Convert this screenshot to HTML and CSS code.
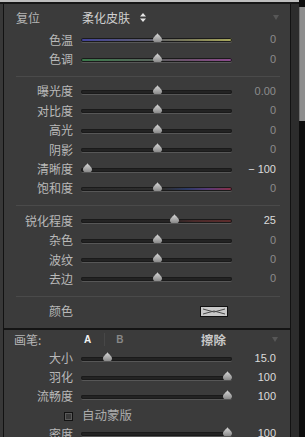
FILE: index.html
```html
<!DOCTYPE html>
<html lang="zh-CN">
<head>
<meta charset="utf-8">
<title>Panel</title>
<link rel="stylesheet" href="styles.css">
</head>
<body>
<svg class="defs" width="0" height="0">
  <defs>
    <linearGradient id="tg" x1="0" y1="0" x2="0" y2="1">
      <stop offset="0" stop-color="#d8d8d8"/>
      <stop offset="1" stop-color="#8a8a8a"/>
    </linearGradient>
    <symbol id="thumb" viewBox="0 0 9 9">
      <path d="M4.5 0.3 C5.6 2 9 4.3 9 6.4 C9 8 8 9 6.5 9 H2.5 C1 9 0 8 0 6.4 C0 4.3 3.4 2 4.5 0.3Z" fill="url(#tg)"/>
    </symbol>
  </defs>
</svg>
<div class="screen">
  <div class="main">
    <div class="topedge"></div>
    <div class="workspace">
      <div class="leftstrip"></div>
      <div class="panels">
        <section class="panel upper">
          <div class="group first">
            <div class="head">
              <span class="reset">复位</span>
              <span class="preset">柔化皮肤<svg class="updown" width="6" height="9" viewBox="0 0 6 9"><path d="M3 0 L6 3.4 H0Z M0 5.6 H6 L3 9Z" fill="#e6e6e6"/></svg></span>
              <span class="collapse"></span>
            </div>
            <div class="row"><span class="label">色温</span><div class="track temp"><svg class="thumb" style="left:72px"><use href="#thumb"/></svg></div><span class="val dim">0</span></div>
            <div class="row"><span class="label">色调</span><div class="track tint"><svg class="thumb" style="left:72px"><use href="#thumb"/></svg></div><span class="val dim">0</span></div>
          </div>
          <div class="sep"></div>
          <div class="group">
            <div class="row"><span class="label">曝光度</span><div class="track"><svg class="thumb" style="left:72px"><use href="#thumb"/></svg></div><span class="val dim">0.00</span></div>
            <div class="row"><span class="label">对比度</span><div class="track"><svg class="thumb" style="left:72px"><use href="#thumb"/></svg></div><span class="val dim">0</span></div>
            <div class="row"><span class="label">高光</span><div class="track"><svg class="thumb" style="left:72px"><use href="#thumb"/></svg></div><span class="val dim">0</span></div>
            <div class="row"><span class="label">阴影</span><div class="track"><svg class="thumb" style="left:72px"><use href="#thumb"/></svg></div><span class="val dim">0</span></div>
            <div class="row"><span class="label">清晰度</span><div class="track"><svg class="thumb" style="left:2px"><use href="#thumb"/></svg></div><span class="val">− 100</span></div>
            <div class="row"><span class="label">饱和度</span><div class="track sat"><svg class="thumb" style="left:72px"><use href="#thumb"/></svg></div><span class="val dim">0</span></div>
          </div>
          <div class="sep"></div>
          <div class="group">
            <div class="row"><span class="label">锐化程度</span><div class="track sharp"><svg class="thumb" style="left:89px"><use href="#thumb"/></svg></div><span class="val">25</span></div>
            <div class="row"><span class="label">杂色</span><div class="track"><svg class="thumb" style="left:72px"><use href="#thumb"/></svg></div><span class="val dim">0</span></div>
            <div class="row"><span class="label">波纹</span><div class="track"><svg class="thumb" style="left:72px"><use href="#thumb"/></svg></div><span class="val dim">0</span></div>
            <div class="row"><span class="label">去边</span><div class="track"><svg class="thumb" style="left:72px"><use href="#thumb"/></svg></div><span class="val dim">0</span></div>
          </div>
          <div class="sep"></div>
          <div class="group">
            <div class="row"><span class="label">颜色</span><div class="swatchcell"><svg class="swatch" width="28" height="11" viewBox="0 0 28 11"><rect x="0.5" y="0.5" width="27" height="10" fill="#c9c9c9" stroke="#111"/><path d="M3 3 L14 6 L25 3 M3 8 L14 5 L25 8" fill="none" stroke="#4a4a4a" stroke-width="1"/></svg></div><span class="val"></span></div>
          </div>
        </section>
        <section class="panel lower">
          <div class="brushhead">
            <span class="blabel">画笔:</span>
            <span class="tab on">A</span>
            <span class="tabsep"></span>
            <span class="tab">B</span>
            <span class="erase">擦除</span>
            <span class="collapse"></span>
          </div>
          <div class="row brow"><span class="label">大小</span><div class="track"><svg class="thumb" style="left:22px"><use href="#thumb"/></svg></div><span class="val">15.0</span></div>
          <div class="row brow"><span class="label">羽化</span><div class="track"><svg class="thumb" style="left:142px"><use href="#thumb"/></svg></div><span class="val">100</span></div>
          <div class="row brow"><span class="label">流畅度</span><div class="track"><svg class="thumb" style="left:142px"><use href="#thumb"/></svg></div><span class="val">100</span></div>
          <div class="row brow"><span class="label"><span class="check"></span></span><span class="automask">自动蒙版</span><span class="val"></span></div>
          <div class="row brow"><span class="label">密度</span><div class="track"><svg class="thumb" style="left:142px"><use href="#thumb"/></svg></div><span class="val">100</span></div>
        </section>
      </div>
      <div class="gutter"></div>
    </div>
  </div>
  <div class="sbar"><div class="sthumb"></div></div>
</div>
</body>
</html>
```

FILE: styles.css
```css
* { box-sizing: border-box; margin: 0; padding: 0; }
html, body { width: 305px; height: 437px; overflow: hidden; background: #0c0c0c; }
body {
  font-family: "Noto Sans CJK SC", "Noto Sans", sans-serif;
  font-size: 12px;
  color: #b9b9b9;
}
.defs { position: absolute; width: 0; height: 0; }
.screen { display: flex; height: 437px; }
.main { width: 299px; display: flex; flex-direction: column; }
.topedge { height: 2px; background: #bebebe; }
.workspace { flex: 1; display: flex; border-top: 2px solid #161616; min-height: 0; }
.leftstrip { width: 3px; background: #383838; }
.panels {
  width: 288px;
  display: flex;
  flex-direction: column;
  border-left: 1px solid #121212;
  border-right: 1px solid #121212;
}
.gutter { width: 8px; background: #2c2c2c; }
.sbar { width: 6px; background: #0d0d0d; }
.sthumb { margin-top: 7px; height: 114px; background: #8e8e8e; border-left: 1px solid #6e6e6e; }

.panel { background: #3b3b3b; }
.upper { border-bottom: 2px solid #141414; }
.lower { flex: 1; }

.group { padding: 5px 0 7px; }
.group.first { padding-top: 0; }
.sep { height: 1px; background: #4a4a4a; margin: 0 10px 0 12px; }

.head { height: 26px; display: flex; align-items: center; }
.reset { width: 78px; padding-left: 12px; color: #b6b6b6; }
.preset { color: #d0d0d0; display: flex; align-items: center; }
.updown { margin-left: 10px; }
.collapse {
  margin-left: auto;
  margin-right: 11px;
  width: 0; height: 0;
  border-left: 3px solid transparent;
  border-right: 3px solid transparent;
  border-top: 5px solid #575757;
}

.row {
  display: grid;
  grid-template-columns: 77px 151px 44px;
  height: 19.4px;
  align-items: center;
}
.label { text-align: right; padding-right: 8px; white-space: nowrap; line-height: 1; }
.val {
  text-align: right;
  font-family: "Liberation Sans", Arial, sans-serif;
  font-size: 11px;
  color: #dcdcdc;
  line-height: 1;
}
.val.dim { color: #8c8c8c; }

.track {
  position: relative;
  height: 4px;
  border-radius: 2px;
  background: #232323;
  box-shadow: inset 0 0 0 1px #1a1a1a, 0 1px 0 #575757;
  margin-top: 1px;
}
.track.temp { background: linear-gradient(90deg, #42429a, #5e5e6e 45%, #7a7a58 70%, #a8a85c); }
.track.tint { background: linear-gradient(90deg, #3a7a4a, #56645a 45%, #6e506e 70%, #8c4a8e); }
.track.sat { background: linear-gradient(90deg, #2a2a2a, #2e2e2e 55%, #2c3a66 70%, #583a78 84%, #8c3046); }
.track.sharp { background: linear-gradient(90deg, #232323, #262424 60%, #4a2a2a 75%, #5e2c2c); }
.thumb { position: absolute; top: -5px; width: 9px; height: 9px; }

.swatchcell { display: flex; justify-content: flex-end; padding-right: 4px; }

.brushhead { height: 19px; display: flex; align-items: center; }
.blabel { width: 80px; padding-left: 10px; color: #b6b6b6; }
.tab {
  font-family: "Liberation Sans", Arial, sans-serif;
  font-weight: bold;
  font-size: 10px;
  color: #888888;
  line-height: 1;
}
.tab.on { color: #f2f2f2; }
.tabsep { width: 1px; height: 13px; background: #474747; margin: 0 11px 0 13px; }
.erase { margin-left: auto; margin-right: 46px; font-weight: bold; color: #c8c8c8; font-size: 12.5px; }
.lower .collapse { margin-left: 0; margin-right: 12px; }
.brow { height: 18.8px; }
.check {
  display: inline-block;
  width: 9px; height: 9px;
  border: 1px solid #121212;
  background: #3a3a3a;
  box-shadow: inset 0 0 0 1px #5a5a5a;
  vertical-align: middle;
}
.automask { padding-left: 1px; font-size: 12.5px; color: #ababab; line-height: 1; }
```
